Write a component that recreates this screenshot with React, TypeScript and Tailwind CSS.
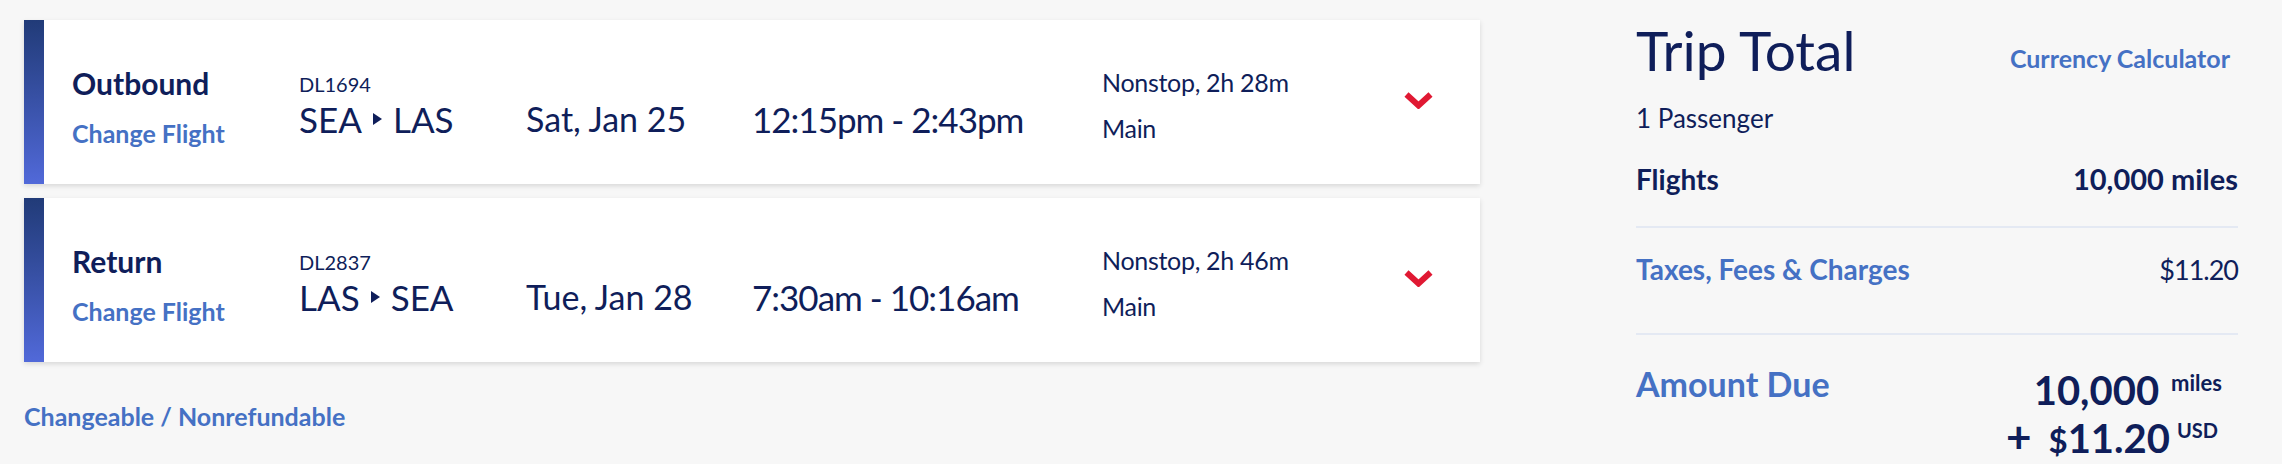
import React from "react";

interface Flight {
  label: string;
  number: string;
  from: string;
  to: string;
  date: string;
  times: string;
  duration: string;
  cabin: string;
}

const flights: Flight[] = [
  {
    label: "Outbound",
    number: "DL1694",
    from: "SEA",
    to: "LAS",
    date: "Sat, Jan 25",
    times: "12:15pm - 2:43pm",
    duration: "Nonstop, 2h 28m",
    cabin: "Main",
  },
  {
    label: "Return",
    number: "DL2837",
    from: "LAS",
    to: "SEA",
    date: "Tue, Jan 28",
    times: "7:30am - 10:16am",
    duration: "Nonstop, 2h 46m",
    cabin: "Main",
  },
];

function Chevron() {
  return (
    <svg width="29" height="17" viewBox="0 0 29 17" fill="none">
      <path d="M2.5 2.5 L14.5 13.5 L26.5 2.5" stroke="#e01933" strokeWidth="6" strokeLinejoin="miter" />
    </svg>
  );
}

function FlightCard({ flight }: { flight: Flight }) {
  return (
    <div className="flex h-[164px] bg-white shadow-[0_2px_5px_rgba(0,0,0,0.13)]">
      {/* accent bar */}
      <div className="w-[20px] shrink-0 bg-linear-to-b from-[#213b78] to-[#5169d9]" />

      <div className="flex w-[255px] shrink-0 flex-col pl-[28px] pt-[45px]">
        <div className="text-[30px] font-bold leading-[36px]">{flight.label}</div>
        <a className="mt-[16px] text-[25px] font-bold leading-[32px] text-[#4571c4]">Change Flight</a>
      </div>

      <div className="flex w-[227px] shrink-0 flex-col pt-[51px]">
        <div className="text-[20px] leading-[26px]">{flight.number}</div>
        <div className="mt-[1px] flex items-center text-[35px] leading-[42px]">
          <span>{flight.from}</span>
          <svg className="mx-[11px]" width="9" height="12" viewBox="0 0 9 12">
            <polygon points="0,0 9,6 0,12" fill="#0f1e5a" />
          </svg>
          <span>{flight.to}</span>
        </div>
      </div>

      <div className="w-[226px] shrink-0 pt-[78px] text-[34px] leading-[42px]">{flight.date}</div>
      <div className="w-[350px] shrink-0 pt-[78px] text-[35px] leading-[42px] tracking-[-1px]">{flight.times}</div>

      <div className="flex w-[302px] shrink-0 flex-col pt-[46px] text-[25px] leading-[32px] tracking-[-0.3px]">
        <div>{flight.duration}</div>
        <div className="mt-[14px]">{flight.cabin}</div>
      </div>

      <div className="pt-[72px]">
        <Chevron />
      </div>
    </div>
  );
}

function TripTotal() {
  return (
    <div className="ml-[156px] flex w-[602px] flex-col">
      <div className="mt-[1px] flex items-start justify-between">
        <h2 className="pb-[6px] text-[55px] leading-[58px]">Trip Total</h2>
        <a className="pr-[8px] pt-[21px] text-[25px] font-bold leading-[32px] text-[#4571c4]">Currency Calculator</a>
      </div>
      <div className="mt-[17px] text-[26px] leading-[32px]">1 Passenger</div>

      <div className="mt-[28px] flex justify-between text-[28px] font-bold leading-[34px]">
        <span>Flights</span>
        <span className="text-[29px]">10,000 miles</span>
      </div>
      <div className="mt-[30px] h-[2px] bg-[#e4e9f3]" />

      <div className="mt-[24px] flex items-baseline justify-between leading-[34px]">
        <span className="text-[28px] font-bold text-[#4571c4]">Taxes, Fees &amp; Charges</span>
        <span className="text-[27px] tracking-[-1px]">$11.20</span>
      </div>
      <div className="mt-[46px] h-[2px] bg-[#e4e9f3]" />

      <div className="mt-[28px] flex items-start justify-between">
        <span className="pt-[1px] text-[34px] font-bold leading-[40px] text-[#4571c4]">Amount Due</span>
        <div className="flex flex-col items-end pr-[16px] font-bold">
          <div className="text-[40px] leading-[40px]">
            10,000
            <span className="ml-[12px] align-[14px] text-[22px]">miles</span>
          </div>
          <div className="pr-[4px] text-[40px] leading-[40px]">
            <span className="mr-[17px] text-[44px]">+</span>
            <span className="text-[33px]">$</span>11.20
            <span className="ml-[7px] align-[15px] text-[20px]">USD</span>
          </div>
        </div>
      </div>
    </div>
  );
}

export default function App() {
  return (
    <div className="flex h-[464px] w-[2282px] bg-[#f7f7f7] pl-[24px] pt-[20px] font-['Lato',sans-serif] text-[#0f1e5a]">
      <div className="flex w-[1456px] shrink-0 flex-col">
        <div className="flex flex-col gap-[14px]">
          {flights.map((f) => (
            <FlightCard key={f.number} flight={f} />
          ))}
        </div>
        <a className="mt-[38px] text-[25px] font-bold leading-[32px] text-[#4571c4]">Changeable / Nonrefundable</a>
      </div>
      <TripTotal />
    </div>
  );
}
